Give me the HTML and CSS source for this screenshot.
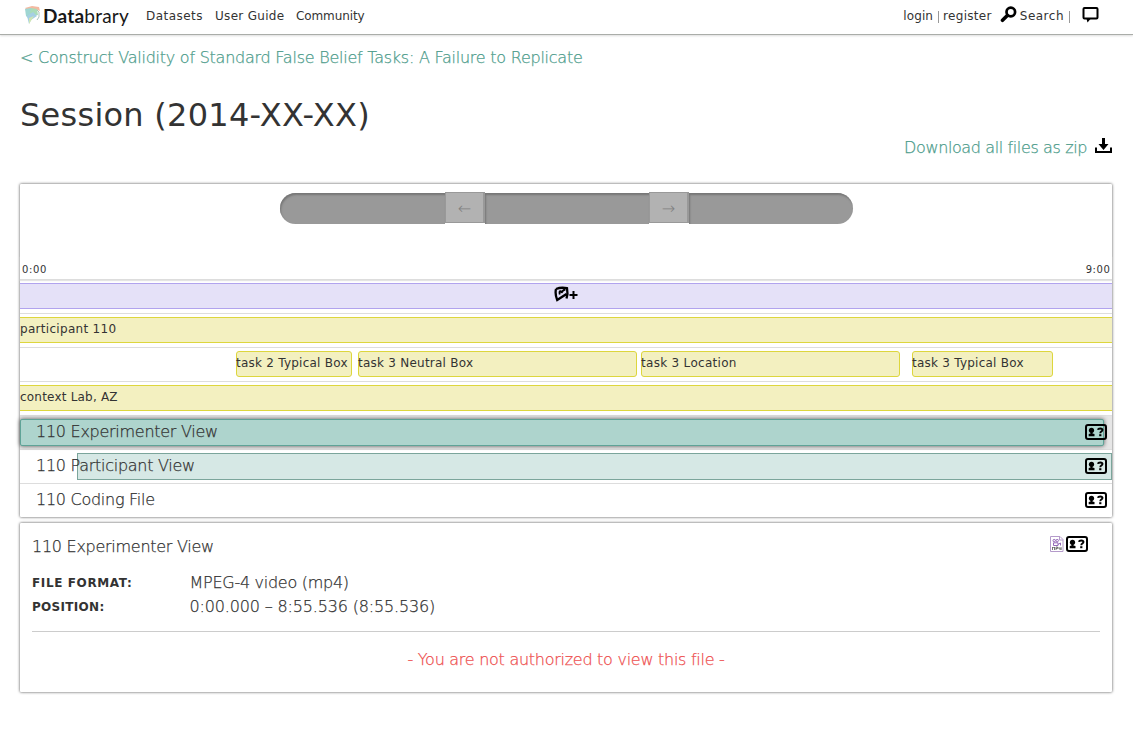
FILE: index.html
```html
<!DOCTYPE html>
<html lang="en">
<head>
<meta charset="utf-8">
<title>Session | Databrary</title>
<link rel="stylesheet" href="styles.css">
</head>
<body>
<svg width="0" height="0" class="defs">
  <symbol id="access" viewBox="0 0 22 16">
    <rect x="1" y="1" width="20" height="14" rx="2" fill="none" stroke="#000" stroke-width="2"/>
    <circle cx="6.500" cy="6.300" r="2.600"/>
    <path d="M5.500 8h2v1.500l2 .6V12.200H3.700v-2.100l1.800-.6z"/>
    <path d="M12.800 5.800q.4-1.300 2.400-1.300 2.300 0 2.300 1.600 0 .9-1.200 1.400-1 .5-1 1.700" fill="none" stroke="#000" stroke-width="1.900"/>
    <rect x="14.200" y="10.200" width="2.200" height="2"/>
  </symbol>
</svg>
<header class="topbar">
  <a class="logo">
    <svg width="17" height="19" viewBox="0 0 17 19">
      <path d="M1 2L8 0l7 1 1 4-5-2-8 1z" fill="#f3b9a0"/>
      <path d="M1 3l6-1 2 5-5 5-2-2z" fill="#9fd6d2"/>
      <path d="M7 2l6 1 1 6-5 1-3-3z" fill="#a9dcb9"/>
      <path d="M3 10l6-4 4 4-6 4-2 4z" fill="#a5cfe3"/>
      <path d="M5 12l5-2-5 8z" fill="#cfe5b5"/>
      <path d="M13 4l2 2v5l-2 3" fill="none" stroke="#a9c3bd"/>
    </svg>
    <span class="wordmark"><b>Data</b>brary</span>
  </a>
  <nav class="nav">
    <a class="n1">Datasets</a><a class="n2">User Guide</a><a class="n3">Community</a>
  </nav>
  <div class="user">
    <a class="login">login</a><i class="sep"></i><a class="register">register</a>
    <svg class="search-icon" width="17" height="17" viewBox="0 0 17 17"><circle cx="10.800" cy="6" r="4.300" fill="none" stroke="#000" stroke-width="2.700"/><path d="M7.300 9.500L2.500 14.300" stroke="#000" stroke-width="3.600" stroke-linecap="round"/></svg>
    <a class="search">Search</a><i class="sep s2"></i>
    <svg class="chat" width="17" height="17" viewBox="0 0 17 17"><path d="M2.500 2h12q1 0 1 1v8.500q0 1-1 1h-12q-1 0-1-1V3q0-1 1-1z" fill="none" stroke="#000" stroke-width="2"/><path d="M4.500 13h4L5.500 16.500z"/></svg>
  </div>
</header>
<main class="page">
  <a class="back light">&lt; Construct Validity of Standard False Belief Tasks: A Failure to Replicate</a>
  <h1 class="title">Session (2014-XX-XX)</h1>
  <div class="download"><a class="light">Download all files as zip</a>
    <svg width="17" height="16" viewBox="0 0 17 16"><path d="M7 0h3v6h3.500l-5 6-5-6H7z"/><path d="M1 9.500V14H16V9.500" fill="none" stroke="#000" stroke-width="2"/></svg>
  </div>
  <section class="panel timeline">
    <div class="slider"><i class="track first"></i><span class="handle">←</span><i class="track"></i><span class="handle">→</span><i class="track last"></i></div>
    <div class="ruler"><span>0:00</span><span>9:00</span></div>
    <div class="row"><div class="bar tags">
      <svg width="24" height="17" viewBox="0 0 24 17"><path d="M2 3Q7 1 13 2.200L13.500 8 12.500 12.500M2 3Q.8 8 3.200 14L12.500 8" fill="none" stroke="#000" stroke-width="2.300"/><path d="M5.800 8.500q-.8-3 .4-3.300 1.300-.2 1.300 1.800 1.500-3.500 4-3.500" fill="none" stroke="#000" stroke-width="1.800"/><path d="M15.500 9h8M19.500 5v8" stroke="#000" stroke-width="2"/></svg>
    </div></div>
    <div class="row"><div class="bar record">participant 110</div></div>
    <div class="row tasks"><div class="bar task t1">task 2 Typical Box</div><div class="bar task t2">task 3 Neutral Box</div><div class="bar task t3">task 3 Location</div><div class="bar task t4">task 3 Typical Box</div></div>
    <div class="row"><div class="bar record context">context Lab, AZ</div></div>
    <div class="row file selected"><div class="clip active"></div><div class="label light"><span>110 Experimenter View</span><svg width="22" height="16"><use href="#access"/></svg></div></div>
    <div class="row file"><div class="clip"></div><div class="label light"><span>110 Participant View</span><svg width="22" height="16"><use href="#access"/></svg></div></div>
    <div class="row file"><div class="label light"><span>110 Coding File</span><svg width="22" height="16"><use href="#access"/></svg></div></div>
  </section>
  <section class="panel detail">
    <div class="head"><span class="light">110 Experimenter View</span>
      <svg class="format" width="14" height="16" viewBox="0 0 14 16"><path d="M.5.500H10l3 3v12H.5z" fill="#fff" stroke="#b49aca"/><path d="M9.500 1v3H13" fill="none" stroke="#b49aca"/><circle cx="4.200" cy="4.600" r="1.200" fill="none" stroke="#9468b8"/><circle cx="7.200" cy="4.600" r="1.200" fill="none" stroke="#9468b8"/><path d="M3.500 6.800h4.500v2.700H3.500zM8 8.500l2.500-1.500v2.500" fill="none" stroke="#9468b8"/><path d="M2.500 14v-3l1 1 1-1v3M6 14v-3h1.500v1.500H6M9 11v2h2.500M11 11v3" fill="none" stroke="#555" stroke-width=".8"/></svg>
      <svg width="22" height="16"><use href="#access"/></svg>
    </div>
    <dl class="facts"><dt class="fmt">FILE FORMAT:</dt><dd class="light">MPEG-4 video (mp4)</dd><dt>POSITION:</dt><dd class="light position">0:00.000 – 8:55.536 (8:55.536)</dd></dl>
    <p class="denied light">- You are not authorized to view this file -</p>
  </section>
</main>
</body>
</html>
```
FILE: styles.css
```css
* { box-sizing: border-box; }
body { margin: 0; min-height: 100vh; background: #fff; color: #333; font: 12px/16px "DejaVu Sans", sans-serif; letter-spacing: .3px; white-space: nowrap; }
.defs { display: block; }
.light { font-family: "DejaVu Sans Light", "DejaVu Sans", sans-serif; font-weight: 200; font-size: 16px; line-height: 24px; letter-spacing: -.27px; -webkit-text-stroke: .25px currentColor; }
.topbar { display: flex; height: 35px; padding: 0 34px 0 24px; border-bottom: 1px solid #aaada9; box-shadow: 0 1px 2px #ddd; }
.logo { display: flex; width: 122px; padding-top: 6px; }
.wordmark { margin-left: 2px; font: 19px/20px Lato, sans-serif; color: #181818; letter-spacing: .22px; }
.nav { display: flex; padding-top: 8px; }
.n1 { width: 69px; letter-spacing: .45px; }
.n2 { width: 81px; }
.n3 { letter-spacing: -.1px; }
.user { display: flex; margin-left: auto; padding-top: 8px; }
.login { letter-spacing: .1px; }
.sep { width: 1px; height: 12px; margin: 3px 4px 0 5px; background: #999; }
.s2 { margin-right: 12px; }
.search-icon { margin: -2px 3px 0 8px; }
.search { letter-spacing: .5px; }
.chat { margin-top: -2px; }
.page { min-height: 703px; padding: 11px 21px 0 20px; }
.back { display: block; color: #4d9c8b; letter-spacing: -.24px; }
.title { margin: 23px 0 0; font-weight: 400; font-size: 32px; line-height: 44px; letter-spacing: .26px; }
.download { display: flex; justify-content: flex-end; margin-top: -1px; height: 24px; color: #4d9c8b; }
.download .light { letter-spacing: -.38px; }
.download svg { margin: 2px 0 0 8px; }
.panel { background: #fff; box-shadow: 0 0 3px #444; border-radius: 1px; }
.timeline { height: 333px; margin-top: 24px; }
.slider { display: flex; justify-content: center; height: 72px; padding-top: 8px; }
.track { width: 164px; height: 31px; margin-top: 1px; background: #999; box-shadow: inset 1px 2px 2px #777; }
.first { width: 165px; border-radius: 16px 0 0 16px; }
.last { border-radius: 0 16px 16px 0; }
.handle { width: 40px; height: 31px; padding-left: 1px; background: #b2b2b2; border: 1px solid #999; border-right-width: 2px; color: #808080; text-align: center; font-weight: 200; font-size: 16px; line-height: 31px; letter-spacing: 0; }
.ruler { display: flex; justify-content: space-between; height: 24px; padding: 7px 1.500px 0 2px; border-bottom: 1px solid #ddd; box-shadow: 0 1px 1px #e4e4e4; font-size: 10px; line-height: 14px; letter-spacing: .6px; }
.row { height: 34px; padding-top: 3px; border-bottom: 1px solid #ddd; }
.row:last-child { border: 0; }
.bar { height: 26px; }
.tags { display: flex; justify-content: center; padding-top: 2px; background: #e5e1f8; border: solid #b1a3ee; border-width: 1px 0; }
.record { background: #f3f0c0; border: solid #ddd63d; border-width: 1px 0; line-height: 23px; }
.context { letter-spacing: .2px; }
.tasks { display: flex; letter-spacing: .24px; }
.task { background: #f3f0c0; border: 1px solid #ddd63d; border-radius: 3px; line-height: 23px; text-indent: -1px; }
.t1 { width: 116px; margin-left: 216px; }
.t2 { width: 279px; margin-left: 6px; }
.t3 { width: 259px; margin-left: 4px; letter-spacing: .3px; }
.t4 { width: 141px; margin-left: 12px; }
.file { display: grid; grid-template: 27px / 100%; }
.selected { background: #e6e6e6; box-shadow: 0 -1px #e0e0e0; }
.clip { grid-area: 1 / 1; margin-left: 57px; background: #d6e8e5; border: 1px solid #7ba59b; }
.active { margin: 0 8px 0 0; background: #aed4cd; border-color: #5fa397; border-radius: 2px; box-shadow: 0 0 4px #555; }
.label { grid-area: 1 / 1; display: flex; justify-content: space-between; padding: 1px 5px 0 16px; z-index: 1; }
.label svg { margin-top: 4px; }
.detail { height: 169px; margin-top: 6px; padding: 12px 12px; }
.head { display: flex; padding-right: 12px; }
.format { margin-left: auto; margin-right: 2px; }
.head svg { margin-top: 1px; }
.facts { display: grid; grid-template: 24px 24px / 157.500px 1fr; margin: 12px 0 0; height: 61px; border-bottom: 1px solid #ccc; }
dt { font-weight: 700; font-size: 12px; line-height: 24px; }
.fmt { letter-spacing: .62px; }
dd { margin: 0; }
.position { letter-spacing: -.16px; }
.denied { margin: 16px 0 0; text-align: center; color: #ee4f4f; }
```
